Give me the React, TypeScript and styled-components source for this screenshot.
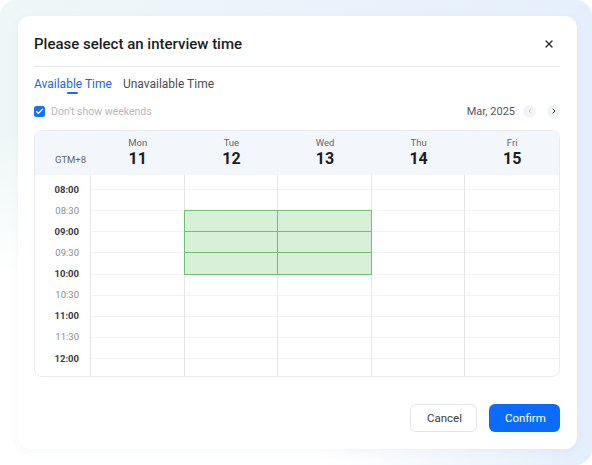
import * as React from 'react';
import styled, { createGlobalStyle } from 'styled-components';
import { Check, ChevronLeft, ChevronRight, X } from 'lucide-react';

type Day = {
  name: string;
  date: number;
};

const days: Day[] = [
  { name: 'Mon', date: 11 },
  { name: 'Tue', date: 12 },
  { name: 'Wed', date: 13 },
  { name: 'Thu', date: 14 },
  { name: 'Fri', date: 15 },
];

const slots = ['08:00', '08:30', '09:00', '09:30', '10:00', '10:30', '11:00', '11:30', '12:00'];

// day index -> picked half-hour slots
const picked: Record<number, string[]> = {
  1: ['08:30', '09:00', '09:30'],
  2: ['08:30', '09:00', '09:30'],
};

const ROW = 21.125;

const App: React.FC = () => {
  const [tab, setTab] = React.useState<'available' | 'unavailable'>('available');
  const [hideWeekends, setHideWeekends] = React.useState(true);

  return (
    <>
      <GlobalStyle />
      <Frame>
        <Dialog>
          <Header>
            <Title>Please select an interview time</Title>
            <CloseButton aria-label="close">
              <X size={12} strokeWidth={2.6} />
            </CloseButton>
          </Header>

          <Tabs>
            <Tab active={tab === 'available'} onClick={() => setTab('available')}>
              Available Time
              <TabBar active={tab === 'available'} />
            </Tab>
            <Tab active={tab === 'unavailable'} onClick={() => setTab('unavailable')}>
              Unavailable Time
              <TabBar active={tab === 'unavailable'} />
            </Tab>
          </Tabs>

          <Toolbar>
            <CheckLabel onClick={() => setHideWeekends(!hideWeekends)}>
              <CheckBox checked={hideWeekends}>
                {hideWeekends && <Check size={9} strokeWidth={3.5} color="#fff" />}
              </CheckBox>
              Don&apos;t show weekends
            </CheckLabel>
            <MonthNav>
              <MonthLabel>Mar, 2025</MonthLabel>
              <NavButton disabled>
                <ChevronLeft size={8} strokeWidth={2.5} />
              </NavButton>
              <NavButton>
                <ChevronRight size={8} strokeWidth={3} />
              </NavButton>
            </MonthNav>
          </Toolbar>

          <Calendar>
            <HeadRow>
              <ZoneCell>GTM+8</ZoneCell>
              {days.map((d) => (
                <DayHead key={d.name}>
                  <DayName>{d.name}</DayName>
                  <DayDate>{d.date}</DayDate>
                </DayHead>
              ))}
            </HeadRow>
            <Body>
              <TimeColumn>
                {slots.map((s) => (
                  <TimeLabel key={s} strong={s.endsWith(':00')}>
                    {s}
                  </TimeLabel>
                ))}
              </TimeColumn>
              {days.map((d, i) => (
                <DayColumn key={d.name} last={i === days.length - 1}>
                  <LeadCell />
                  {slots.map((s, j) => (
                    <Slot
                      key={s}
                      h={j === slots.length - 1 ? 18 : ROW}
                      selected={(picked[i] || []).includes(s)}
                    />
                  ))}
                </DayColumn>
              ))}
            </Body>
          </Calendar>

          <Footer>
            <CancelButton>Cancel</CancelButton>
            <ConfirmButton>Confirm</ConfirmButton>
          </Footer>
        </Dialog>
      </Frame>
    </>
  );
};

export default App;

const GlobalStyle = createGlobalStyle`
  * {
    box-sizing: border-box;
  }
  body {
    margin: 0;
    background: #ffffff;
    font-family: Roboto, 'Liberation Sans', Arial, sans-serif;
    -webkit-font-smoothing: antialiased;
  }
`;

const Frame = styled.div`
  width: 592px;
  height: 465px;
  padding: 16px 15px 16px 18px;
  border-radius: 16px;
  background:
    radial-gradient(120% 90% at 0% 100%, #ffffff 45%, rgba(255, 255, 255, 0) 80%),
    linear-gradient(90deg, #eef7f6 0%, #eaf3fb 55%, #e5effc 100%);
`;

const Dialog = styled.div`
  height: 100%;
  display: flex;
  flex-direction: column;
  padding: 17px 17px 17px 16px;
  background: #ffffff;
  border-radius: 12px;
  box-shadow: 0 2px 10px rgba(40, 80, 140, 0.05);
`;

const Header = styled.div`
  display: flex;
  align-items: center;
  justify-content: space-between;
  padding-bottom: 11px;
  border-bottom: 1px solid #e6e7ea;
`;

const Title = styled.h2`
  margin: 0;
  font-size: 15px;
  line-height: 22px;
  font-weight: 500;
  color: #1c1d21;
`;

const CloseButton = styled.button`
  display: flex;
  align-items: center;
  justify-content: center;
  width: 16px;
  height: 16px;
  margin-right: 3px;
  padding: 0;
  border: none;
  background: none;
  color: #25272d;
  cursor: pointer;
`;

const Tabs = styled.div`
  display: flex;
  gap: 11px;
  margin-top: 10px;
`;

const Tab = styled.div<{ active: boolean }>`
  display: flex;
  flex-direction: column;
  align-items: center;
  font-size: 12px;
  line-height: 15px;
  color: ${(p) => (p.active ? '#2168d8' : '#4b4d52')};
  cursor: pointer;
`;

const TabBar = styled.span<{ active: boolean }>`
  width: 11px;
  height: 2px;
  border-radius: 1px;
  background: ${(p) => (p.active ? '#2168d8' : 'transparent')};
`;

const Toolbar = styled.div`
  display: flex;
  align-items: center;
  justify-content: space-between;
  height: 14px;
  margin-top: 10px;
`;

const CheckLabel = styled.label`
  display: flex;
  align-items: center;
  gap: 6px;
  font-size: 10.5px;
  color: #b5b7bb;
  cursor: pointer;
`;

const CheckBox = styled.span<{ checked: boolean }>`
  display: flex;
  align-items: center;
  justify-content: center;
  width: 11px;
  height: 11px;
  border-radius: 2.5px;
  background: ${(p) => (p.checked ? '#1673f0' : '#fff')};
  border: ${(p) => (p.checked ? 'none' : '1px solid #d0d3d8')};
`;

const MonthNav = styled.div`
  display: flex;
  align-items: center;
  gap: 11px;
`;

const MonthLabel = styled.span`
  font-size: 11px;
  color: #55575c;
  margin-right: -3px;
`;

const NavButton = styled.button`
  display: flex;
  align-items: center;
  justify-content: center;
  width: 13px;
  height: 13px;
  padding: 0;
  border: none;
  border-radius: 50%;
  background: #f3f4f6;
  color: #2b2d33;
  cursor: pointer;
  &:disabled {
    color: #c9cbd0;
    cursor: default;
  }
`;

const Calendar = styled.div`
  margin-top: 12px;
  border: 1px solid #ececef;
  border-radius: 8px;
  overflow: hidden;
`;

const HeadRow = styled.div`
  display: grid;
  grid-template-columns: 56px repeat(5, 1fr);
  height: 44px;
  background: #f3f6fb;
`;

const ZoneCell = styled.div`
  display: flex;
  align-items: flex-end;
  justify-content: center;
  padding: 0 0 9px 15px;
  font-size: 9.5px;
  line-height: 12px;
  color: #65676c;
`;

const DayHead = styled.div`
  display: flex;
  flex-direction: column;
  align-items: center;
  padding-top: 6px;
`;

const DayName = styled.span`
  font-size: 9.5px;
  line-height: 12px;
  color: #65676c;
`;

const DayDate = styled.span`
  font-size: 16px;
  line-height: 20px;
  font-weight: 700;
  color: #1c1d21;
`;

const Body = styled.div`
  display: grid;
  grid-template-columns: 56px repeat(5, 1fr);
`;

const TimeColumn = styled.div`
  display: flex;
  flex-direction: column;
  padding-top: 3.5px;
  border-right: 1px solid #e6e7ea;
`;

const TimeLabel = styled.span<{ strong: boolean }>`
  height: ${ROW}px;
  line-height: ${ROW}px;
  padding-right: 11px;
  text-align: right;
  font-size: 9.5px;
  font-weight: ${(p) => (p.strong ? 700 : 400)};
  color: ${(p) => (p.strong ? '#3a3c41' : '#8a8c91')};
`;

const DayColumn = styled.div<{ last: boolean }>`
  display: flex;
  flex-direction: column;
  border-right: ${(p) => (p.last ? 'none' : '1px solid #e6e7ea')};
`;

const LeadCell = styled.div`
  height: 14px;
`;

const Slot = styled.div<{ h: number; selected: boolean }>`
  height: ${(p) => (p.selected ? p.h + 1 : p.h)}px;
  border-top: 1px solid #f1f2f4;
  ${(p) =>
    p.selected &&
    `
    position: relative;
    z-index: 1;
    margin: 0 -1px -1px -1px;
    background: #d8f0d8;
    border: 1px solid #70c070;
  `}
`;

const Footer = styled.div`
  display: flex;
  justify-content: flex-end;
  gap: 12px;
  margin-top: auto;
`;

const BaseButton = styled.button`
  height: 28px;
  padding: 0 16px;
  border-radius: 6px;
  font-family: inherit;
  font-size: 11.5px;
  cursor: pointer;
`;

const CancelButton = styled(BaseButton)`
  width: 67px;
  border: 1px solid #e3e4e8;
  background: #ffffff;
  color: #3a3c41;
`;

const ConfirmButton = styled(BaseButton)`
  width: 71px;
  border: none;
  background: #0a6cff;
  color: #ffffff;
`;
